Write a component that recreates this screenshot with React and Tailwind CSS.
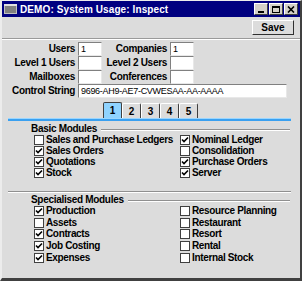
import React from 'react'

const font = { fontFamily: '"Liberation Sans", Arial, sans-serif' }

function Check({ checked, label, h }) {
  return (
    <div className="flex items-center gap-[2px]" style={{ height: h }}>
      <span className="w-[10px] h-[10px] bg-white border border-[#404040] flex items-center justify-center shrink-0">
        {checked && (
          <svg width="8" height="8" viewBox="0 0 8 8">
            <path d="M1 3.5 L3 5.5 L7 1.5" stroke="#000" strokeWidth="1.6" fill="none" />
          </svg>
        )}
      </span>
      <span className="text-[10px] font-bold leading-none text-black whitespace-nowrap tracking-[-0.35px]">{label}</span>
    </div>
  )
}

function Field({ w, value }) {
  return (
    <div
      className="h-[14px] bg-white border border-t-[#808080] border-l-[#808080] border-r-[#e8e8e8] border-b-[#e8e8e8] text-[9px] leading-[12px] px-[2px] text-black overflow-hidden whitespace-nowrap tracking-[-0.3px]"
      style={{ width: w }}
    >
      {value}
    </div>
  )
}

function Group({ title, left, right, h }) {
  return (
    <div className="pl-[29px]">
      <div className="flex items-center gap-[4px] h-[11px]">
        <span className="text-[10px] font-bold text-black leading-none whitespace-nowrap tracking-[-0.3px]">{title}</span>
        <span className="flex-1 h-[2px] border-t border-[#909090] border-b border-b-white mr-[10px] mt-[3px]" />
      </div>
      <div className="flex pl-[3px]">
        <div className="w-[146px] flex flex-col">
          {left.map(([l, c]) => <Check key={l} label={l} checked={c} h={h} />)}
        </div>
        <div className="flex flex-col">
          {right.map(([l, c]) => <Check key={l} label={l} checked={c} h={h} />)}
        </div>
      </div>
    </div>
  )
}

const lbl = 'text-right pr-[3px] text-[10px] font-bold text-black leading-none whitespace-nowrap tracking-[-0.3px]'

export default function App() {
  return (
    <div className="w-[302px] h-[281px] bg-[#dcdcdc] border-l-2 border-t border-r-2 border-b-3 border-l-[#ececec] border-t-[#ececec] border-r-[#404040] border-b-[#404040] flex flex-col" style={font}>
      {/* Title bar */}
      <div className="h-[16px] bg-[#000080] flex items-center pl-[2px] pr-[2px]">
        <svg width="13" height="10" viewBox="0 0 13 10" className="mr-[3px]">
          <rect x="0" y="0" width="13" height="10" fill="#c0c0c0" />
          <rect x="1" y="2" width="11" height="7" fill="#808080" />
          <rect x="0" y="0" width="13" height="2" fill="#e0e0e0" />
        </svg>
        <span className="text-white text-[10px] font-bold tracking-[0.1px]">DEMO: System Usage: Inspect</span>
        <div className="ml-auto flex gap-[1px]">
          {['min', 'max', 'close'].map(b => (
            <div key={b} className="w-[14px] h-[12px] bg-[#d4d0c8] border border-t-white border-l-white border-r-[#404040] border-b-[#404040] flex items-center justify-center">
              {b === 'min' && <span className="block w-[6px] h-[2px] bg-black mt-[5px]" />}
              {b === 'max' && <span className="block w-[8px] h-[7px] border border-black border-t-2" />}
              {b === 'close' && (
                <svg width="8" height="7" viewBox="0 0 8 7">
                  <path d="M1 0.5 L7 6.5 M7 0.5 L1 6.5" stroke="#000" strokeWidth="1.6" />
                </svg>
              )}
            </div>
          ))}
        </div>
      </div>

      {/* Toolbar */}
      <div className="h-[22px] flex items-center justify-end pr-[6px] border-b border-[#9a9a9a]">
        <button className="w-[42px] h-[15px] bg-[#dcdcdc] border border-t-white border-l-white border-r-[#303030] border-b-[#303030] text-[10px] font-bold leading-none text-black">
          Save
        </button>
      </div>
      <div className="h-px bg-white" />

      {/* Header fields */}
      <div className="pt-[2px] flex flex-col">
        {[
          ['Users', '1', 'Companies', '1'],
          ['Level 1 Users', '', 'Level 2 Users', ''],
          ['Mailboxes', '', 'Conferences', ''],
        ].map(([a, av, b, bv]) => (
          <div key={a} className="flex items-center h-[14px]">
            <span className={'w-[76px] ' + lbl}>{a}</span>
            <Field w={24} value={av} />
            <span className={'w-[68px] ' + lbl}>{b}</span>
            <Field w={24} value={bv} />
          </div>
        ))}
        <div className="flex items-center h-[14px]">
          <span className={'w-[76px] ' + lbl}>Control String</span>
          <Field w={209} value="9696-AH9-AE7-CVWESAA-AA-AAAA" />
        </div>
      </div>

      {/* Tabs */}
      <div className="mt-[4px] flex pl-[101px] h-[16px] items-end">
        {['1', '2', '3', '4', '5'].map((t, i) => (
          <div
            key={t}
            className={
              i === 0
                ? 'w-[19px] h-[16px] bg-[#8fd3ff] border border-b-0 border-[#404040] rounded-t-[2px] text-[10px] font-bold flex items-center justify-center text-black'
                : 'w-[19px] h-[15px] bg-[#dcdcdc] border border-b-0 border-l-white border-t-white border-r-[#404040] rounded-t-[2px] text-[10px] font-bold flex items-center justify-center text-black'
            }
          >
            {t}
          </div>
        ))}
      </div>
      <div className="ml-[6px] mr-[9px] h-[3px] bg-[#3aa0f0] border-t border-[#9ad6ff]" />

      {/* Modules */}
      <div className="mt-[2px]">
        <Group
          h={11}
          title="Basic Modules"
          left={[['Sales and Purchase Ledgers', false], ['Sales Orders', true], ['Quotations', true], ['Stock', true]]}
          right={[['Nominal Ledger', true], ['Consolidation', false], ['Purchase Orders', true], ['Server', true]]}
        />
      </div>
      <div className="ml-[6px] mr-[9px] mt-[13px] h-[2px] border-t border-[#909090] border-b border-b-white" />
      <div className="mt-[1px]">
        <Group
          h={11.75}
          title="Specialised Modules"
          left={[['Production', true], ['Assets', false], ['Contracts', true], ['Job Costing', true], ['Expenses', true]]}
          right={[['Resource Planning', false], ['Restaurant', false], ['Resort', false], ['Rental', false], ['Internal Stock', false]]}
        />
      </div>
    </div>
  )
}
